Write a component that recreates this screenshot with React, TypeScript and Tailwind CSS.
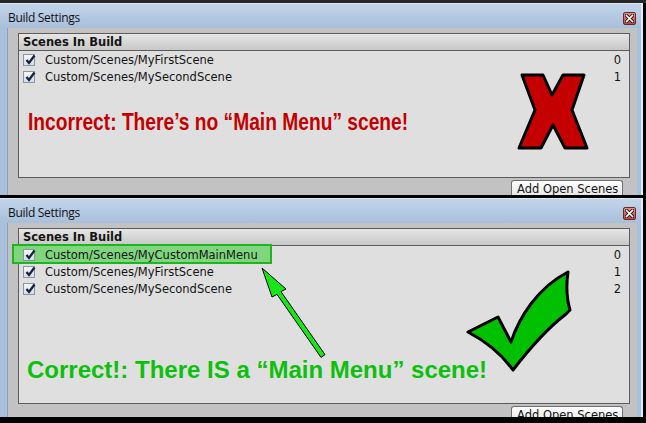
import React from "react";

type Row = { path: string; index: number; highlight?: boolean };

const topRows: Row[] = [
  { path: "Custom/Scenes/MyFirstScene", index: 0 },
  { path: "Custom/Scenes/MySecondScene", index: 1 },
];

const bottomRows: Row[] = [
  { path: "Custom/Scenes/MyCustomMainMenu", index: 0, highlight: true },
  { path: "Custom/Scenes/MyFirstScene", index: 1 },
  { path: "Custom/Scenes/MySecondScene", index: 2 },
];

function CloseButton() {
  return (
    <div className="mt-[8px] w-[13px] h-[13px] rounded-[2px] border border-[#6b2626] bg-gradient-to-b from-[#e0958d] to-[#b9483f] flex items-center justify-center">
      <svg width="9" height="9" viewBox="0 0 9 9">
        <path d="M1.5 1.5 L7.5 7.5 M7.5 1.5 L1.5 7.5" stroke="#3b1010" strokeWidth="3.4" strokeLinecap="square" />
        <path d="M1.5 1.5 L7.5 7.5 M7.5 1.5 L1.5 7.5" stroke="#ffffff" strokeWidth="1.6" strokeLinecap="square" />
      </svg>
    </div>
  );
}

function Checkbox() {
  return (
    <div className="relative w-[12px] h-[12px] border border-[#8796a8] bg-gradient-to-b from-[#f6f6f6] to-[#d6dce5] shrink-0">
      <svg className="absolute -top-[2px] left-[0px]" width="13" height="13" viewBox="0 0 13 13">
        <path d="M2.5 7 L5 10 L10.5 2.5" fill="none" stroke="#17223b" strokeWidth="2.3" />
      </svg>
    </div>
  );
}

function SceneRow({ row }: { row: Row }) {
  return (
    <div className="relative h-[17px] flex items-center pl-[4px] pr-[8px]">
      {row.highlight && (
        <div className="absolute left-[-7px] top-[-2px] w-[260px] h-[20px] border-2 border-[#1fb51f] bg-[#7fd67f]" />
      )}
      <div className="relative flex items-center">
        <Checkbox />
        <span className="ml-[10px] text-[#141414]">{row.path}</span>
      </div>
      <span className="relative ml-auto text-[#141414]">{row.index}</span>
    </div>
  );
}

function BuildWindow({ rows, tall }: { rows: Row[]; tall?: boolean }) {
  return (
    <div
      className={`flex flex-col w-[643px] border-r-2 border-[#e4ecf5] bg-[#a9c0dc] overflow-hidden ${
        tall ? "h-[219px]" : "h-[192px]"
      }`}
    >
      {/* title bar */}
      <div className="h-[25px] shrink-0 flex items-start justify-between pl-[8px] pr-[5px] border-t border-[#dce7f3] bg-gradient-to-b from-[#c2d5ea] to-[#a8bfdb]">
        <span className="pt-[6px] text-[12px] leading-[16px] tracking-[-0.3px] text-[#111] font-['Open_Sans',sans-serif]">
          Build Settings
        </span>
        <CloseButton />
      </div>

      {/* body */}
      <div className="flex-1 ml-[7px] mr-[4px] bg-[#c2c2c2] border-l border-[#8d9fb5] flex flex-col pt-[5px]">
        <div
          className={`ml-[10px] mr-[7px] border border-[#5c5c5c] bg-[#dfdfdf] flex flex-col ${
            tall ? "h-[176px]" : "h-[145px]"
          }`}
        >
          <div className="h-[17px] shrink-0 flex items-center pl-[4px] border-b border-[#5c5c5c] bg-gradient-to-b from-[#e6e6e6] to-[#c8c8c8] font-bold text-[#141414]">
            Scenes In Build
          </div>
          {rows.map((row) => (
            <SceneRow key={row.path} row={row} />
          ))}
        </div>
        <div className="flex justify-end pr-[14px] mt-[2px]">
          <div className="w-[112px] h-[17px] rounded-t-[3px] border border-b-0 border-[#6f6f6f] bg-gradient-to-b from-white to-[#e4e4e4] pl-[5px] pt-[1px] text-[#141414]">
            Add Open Scenes
          </div>
        </div>
      </div>
    </div>
  );
}

export default function App() {
  return (
    <div className="relative w-[646px] h-[423px] overflow-hidden bg-black text-[11.5px] leading-[14px] font-['DejaVu_Sans',sans-serif]">
      <div className="h-[3px] bg-[#262626]" />
      <BuildWindow rows={topRows} />
      <div className="h-[3px] bg-black" />
      <BuildWindow rows={bottomRows} tall />

      {/* annotations */}
      <span className="absolute left-[28px] top-[110px] whitespace-nowrap origin-left scale-x-[0.8] font-['Liberation_Sans',Arial,sans-serif] font-bold text-[24px] leading-[24px] text-[#c40000]">
        Incorrect: There’s no “Main Menu” scene!
      </span>
      <span className="absolute left-[27px] top-[358px] whitespace-nowrap font-['Liberation_Sans',Arial,sans-serif] font-bold text-[24px] leading-[24px] text-[#0cc00c]">
        Correct!: There IS a “Main Menu” scene!
      </span>

      <svg className="absolute inset-0 pointer-events-none" width="646" height="423" viewBox="0 0 646 423">
        {/* red X */}
        <g transform="translate(518 74)">
          <polygon
            points="4,1 25,1 34,21 45,1 66,1 54,36 69,74 47,74 35,51 23,74 1,74 17,36"
            fill="#c40000"
            stroke="#000"
            strokeWidth="3"
            strokeLinejoin="round"
          />
        </g>
        {/* green check */}
        <g transform="translate(465 268)">
          <path
            d="M3,64 L33,49 L46,74 C54,50 72,20 103,4 C101,18 102,32 105,42 L101,46 C88,56 68,76 48,102 C38,88 22,74 3,64 Z"
            fill="#00c000"
            stroke="#000"
            strokeWidth="3"
            strokeLinejoin="round"
          />
        </g>
        {/* green arrow */}
        <polygon
          points="262,268 286,289 281,291.6 325,354.6 321,357.4 277,294.4 272,297"
          fill="#19e619"
          stroke="#000"
          strokeWidth="1"
          strokeLinejoin="round"
        />
      </svg>
    </div>
  );
}
